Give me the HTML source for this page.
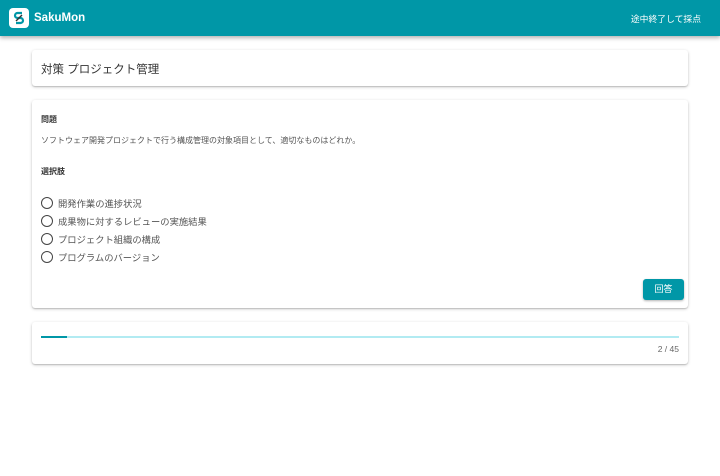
<!DOCTYPE html>
<html><head><meta charset="utf-8"><style>
*{margin:0;padding:0;box-sizing:border-box}
body{width:720px;height:476px;background:#fff;font-family:"Liberation Sans","Noto Sans CJK JP",sans-serif;position:relative;overflow:hidden}
.hd{position:absolute;left:0;top:0;width:720px;height:36px;background:#0097a7;box-shadow:0 2px 4px rgba(0,0,0,.3)}
.logo{position:absolute;left:9px;top:8px;width:20px;height:20px;background:#fff;border-radius:4px}
.brand{position:absolute;left:34px;top:12px;color:#fff;font-size:11.5px;font-weight:bold}
.end{position:absolute;right:19px;top:12px;color:#fff;font-size:8.8px}
.card{position:absolute;left:32px;width:656px;background:#fff;border-radius:3px;box-shadow:0 1px 3px rgba(0,0,0,.2),0 1px 1px rgba(0,0,0,.14)}
.t{position:absolute;left:41px;font-size:11.5px;color:#333}
.s{position:absolute;left:41px;font-size:8px;font-weight:bold;color:#333}
.q{position:absolute;left:41px;font-size:8px;color:#555}
.o{position:absolute;left:41px;font-size:9.3px;color:#555;height:14px;line-height:14px}
.o i{display:inline-block;width:12px;height:12px;border:1.5px solid #444;border-radius:50%;vertical-align:-2px;margin-right:5px}
.btn{position:absolute;left:643px;top:279px;width:41px;height:21px;background:#0097a7;border-radius:3px;color:#fff;font-size:9px;text-align:center;line-height:21px;box-shadow:0 1px 2px rgba(0,0,0,.3)}
</style></head><body>
<div class="hd"><div class="logo"><svg width="20" height="20" viewBox="0 0 20 20"><path d="M13 5H8.5a2.5 2.5 0 0 0 0 5h3a2.5 2.5 0 0 1 0 5H7" fill="none" stroke="#0097a7" stroke-width="2.2"/><path d="M7 13l6-6" stroke="#333" stroke-width="1.4"/></svg></div><div class="brand">SakuMon</div><div class="end">途中終了して採点</div></div>
<div class="card" style="top:50px;height:36px"></div>
<div class="t" style="top:61px">対策 プロジェクト管理</div>
<div class="card" style="top:100px;height:208px"></div>
<div class="s" style="top:114px">問題</div>
<div class="q" style="top:135px">ソフトウェア開発プロジェクトで行う構成管理の対象項目として、適切なものはどれか。</div>
<div class="s" style="top:166px">選択肢</div>
<div class="o" style="top:197px"><i></i>開発作業の進捗状況</div>
<div class="o" style="top:215px"><i></i>成果物に対するレビューの実施結果</div>
<div class="o" style="top:233px"><i></i>プロジェクト組織の構成</div>
<div class="o" style="top:251px"><i></i>プログラムのバージョン</div>
<div class="btn">回答</div>
<div class="card" style="top:322px;height:42px"></div>
<div style="position:absolute;left:41px;top:336px;width:638px;height:2px;background:#b2ebf2"></div>
<div style="position:absolute;left:41px;top:336px;width:26px;height:2px;background:#0097a7"></div>
<div style="position:absolute;right:41px;top:344px;font-size:8.5px;color:#666">2 / 45</div>
</body></html>
